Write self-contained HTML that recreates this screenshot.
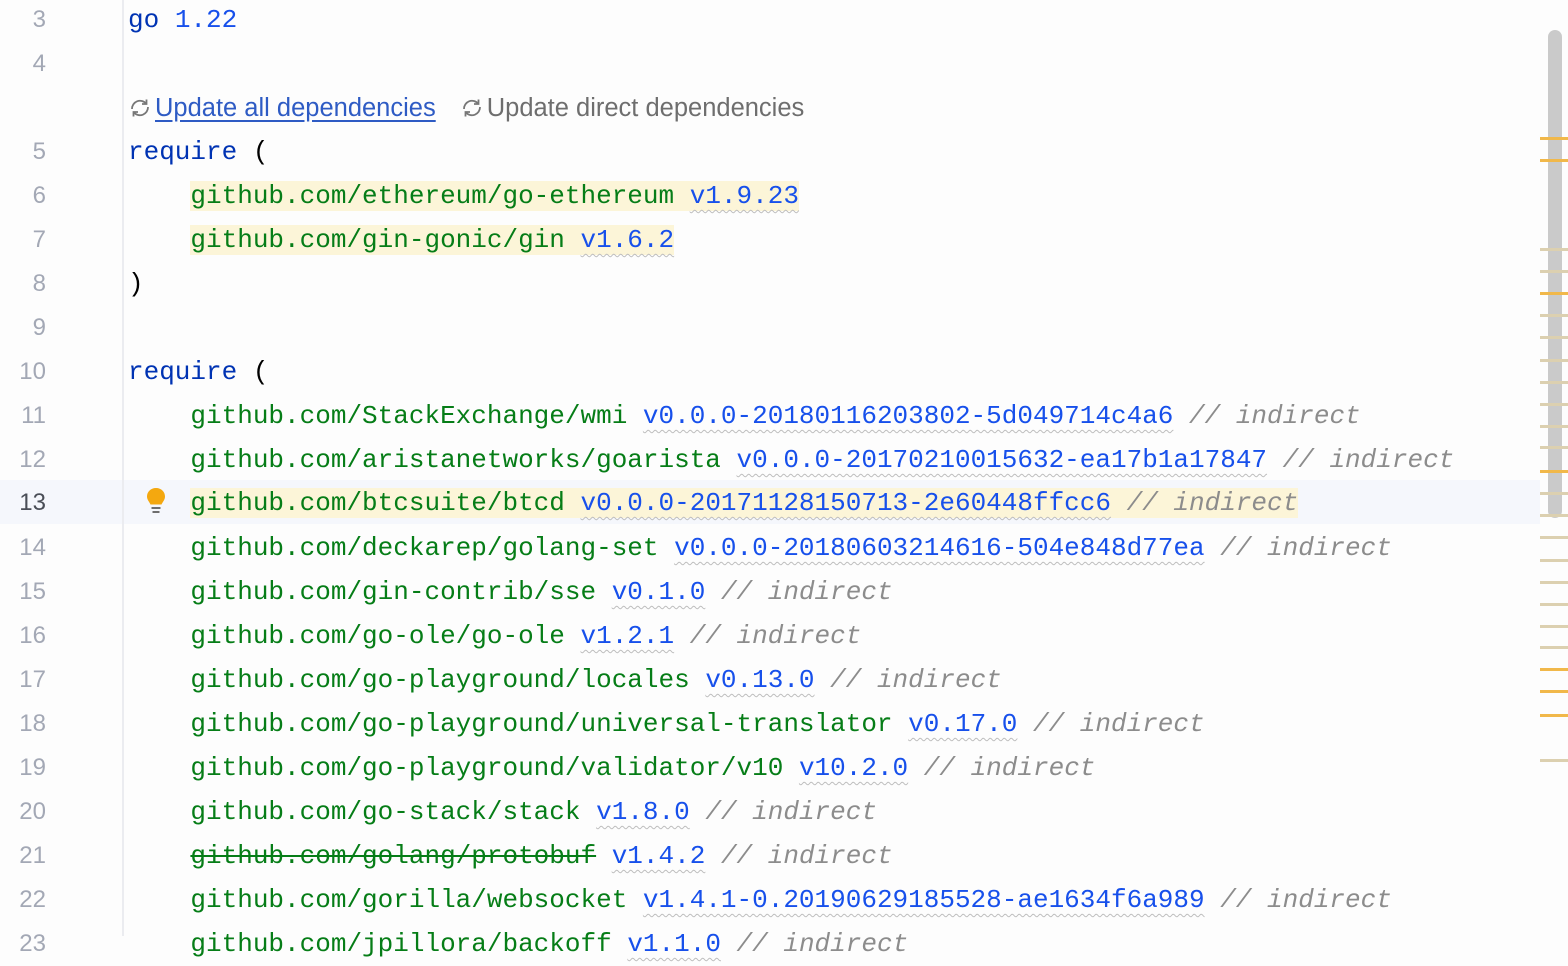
<!DOCTYPE html>
<html><head><meta charset="utf-8"><style>
html,body{margin:0;padding:0;width:1568px;height:936px;overflow:hidden;background:#fdfdfd;}
.row{position:absolute;left:0;width:1540px;height:44px;line-height:44px;font-family:"Liberation Mono",monospace;font-size:26px;white-space:pre;}
.ln{position:absolute;left:0;width:46px;text-align:right;color:#a3a8b5;font-family:"Liberation Sans",sans-serif;font-size:24px;}
.cur .ln{color:#4a4e57;}
.code{position:absolute;left:128px;top:0;}
.k{color:#0033b3}.n{color:#1750eb}.g{color:#067d17}.c{color:#8c8c8c;font-style:italic}
.v{color:#1750eb;text-decoration:underline wavy #bdbdbd;text-decoration-thickness:1px;text-underline-offset:6px}
.s{text-decoration:line-through;text-decoration-color:#067d17;text-decoration-thickness:2px}
.hl{background:#fcf5d8}
.gutter{position:absolute;left:122px;top:0;width:2px;height:936px;background:#ebecf0}
.mark{position:absolute;left:1540px;width:28px;height:3px;background:#dcd0b0}
.mark.o{background:#f1b84a}
.ico{display:inline-block;vertical-align:-3px;margin-right:3px}
</style></head><body>
<div style="position:absolute;left:0;top:480px;width:1540px;height:44px;background:#f5f7fc"></div>
<div class="gutter"></div>

<div class="row" style="top:-2px"><span class="ln">3</span><span class="code"><span class="k">go</span> <span class="n">1.22</span></span></div>
<div class="row" style="top:42px"><span class="ln">4</span></div>
<div style="position:absolute;top:91px;left:128px;font-family:'Liberation Sans',sans-serif;font-size:25.5px;line-height:34px;white-space:nowrap;">
<svg class="ico" width="24" height="22" viewBox="0 0 24 22" fill="none" stroke="#777" stroke-width="1.8"><path d="M4 12a8 8 0 0 1 14-5.5"/><path d="M20 10a8 8 0 0 1-14 5.5"/><path d="M18.5 2.5v4.5h-4.5"/><path d="M5.5 19.5v-4.5h4.5"/></svg><span style="color:#2e5bc4;text-decoration:underline;text-underline-offset:4px">Update all dependencies</span><span style="display:inline-block;width:24px"></span><svg class="ico" width="24" height="22" viewBox="0 0 24 22" fill="none" stroke="#777" stroke-width="1.8"><path d="M4 12a8 8 0 0 1 14-5.5"/><path d="M20 10a8 8 0 0 1-14 5.5"/><path d="M18.5 2.5v4.5h-4.5"/><path d="M5.5 19.5v-4.5h4.5"/></svg><span style="color:#6e6e6e">Update direct dependencies</span></div>
<div class="row" style="top:130px"><span class="ln">5</span><span class="code"><span class="k">require</span> (</span></div>
<div class="row" style="top:174px"><span class="ln">6</span><span class="code">    <span class="hl"><span class="g">github.com/ethereum/go-ethereum</span> <span class="v">v1.9.23</span></span></span></div>
<div class="row" style="top:218px"><span class="ln">7</span><span class="code">    <span class="hl"><span class="g">github.com/gin-gonic/gin</span> <span class="v">v1.6.2</span></span></span></div>
<div class="row" style="top:262px"><span class="ln">8</span><span class="code">)</span></div>
<div class="row" style="top:306px"><span class="ln">9</span></div>
<div class="row" style="top:350px"><span class="ln">10</span><span class="code"><span class="k">require</span> (</span></div>
<div class="row" style="top:394px"><span class="ln">11</span><span class="code">    <span class="g">github.com/StackExchange/wmi</span> <span class="v">v0.0.0-20180116203802-5d049714c4a6</span> <span class="c">// indirect</span></span></div>
<div class="row" style="top:438px"><span class="ln">12</span><span class="code">    <span class="g">github.com/aristanetworks/goarista</span> <span class="v">v0.0.0-20170210015632-ea17b1a17847</span> <span class="c">// indirect</span></span></div>
<div class="row cur" style="top:481px"><span class="ln">13</span><span class="code">    <span class="hl"><span class="g">github.com/btcsuite/btcd</span> <span class="v">v0.0.0-20171128150713-2e60448ffcc6</span> <span class="c">// indirect</span></span></span>
<svg style="position:absolute;left:145px;top:6px" width="22" height="32" viewBox="0 0 22 32"><path d="M11 1C5.5 1 2 5 2 9.5c0 3.5 2.5 5.5 3.5 8h11c1-2.5 3.5-4.5 3.5-8C20 5 16.5 1 11 1z" fill="#f4a80f"/><rect x="6.5" y="20" width="9" height="2" fill="#6e6e6e"/><rect x="7.5" y="24" width="7" height="2" fill="#6e6e6e"/></svg></div>
<div class="row" style="top:526px"><span class="ln">14</span><span class="code">    <span class="g">github.com/deckarep/golang-set</span> <span class="v">v0.0.0-20180603214616-504e848d77ea</span> <span class="c">// indirect</span></span></div>
<div class="row" style="top:570px"><span class="ln">15</span><span class="code">    <span class="g">github.com/gin-contrib/sse</span> <span class="v">v0.1.0</span> <span class="c">// indirect</span></span></div>
<div class="row" style="top:614px"><span class="ln">16</span><span class="code">    <span class="g">github.com/go-ole/go-ole</span> <span class="v">v1.2.1</span> <span class="c">// indirect</span></span></div>
<div class="row" style="top:658px"><span class="ln">17</span><span class="code">    <span class="g">github.com/go-playground/locales</span> <span class="v">v0.13.0</span> <span class="c">// indirect</span></span></div>
<div class="row" style="top:702px"><span class="ln">18</span><span class="code">    <span class="g">github.com/go-playground/universal-translator</span> <span class="v">v0.17.0</span> <span class="c">// indirect</span></span></div>
<div class="row" style="top:746px"><span class="ln">19</span><span class="code">    <span class="g">github.com/go-playground/validator/v10</span> <span class="v">v10.2.0</span> <span class="c">// indirect</span></span></div>
<div class="row" style="top:790px"><span class="ln">20</span><span class="code">    <span class="g">github.com/go-stack/stack</span> <span class="v">v1.8.0</span> <span class="c">// indirect</span></span></div>
<div class="row" style="top:834px"><span class="ln">21</span><span class="code">    <span class="g s">github.com/golang/protobuf</span> <span class="v">v1.4.2</span> <span class="c">// indirect</span></span></div>
<div class="row" style="top:878px"><span class="ln">22</span><span class="code">    <span class="g">github.com/gorilla/websocket</span> <span class="v">v1.4.1-0.20190629185528-ae1634f6a989</span> <span class="c">// indirect</span></span></div>
<div class="row" style="top:922px"><span class="ln">23</span><span class="code">    <span class="g">github.com/jpillora/backoff</span> <span class="v">v1.1.0</span> <span class="c">// indirect</span></span></div>

<div style="position:absolute;left:1548px;top:30px;width:14px;height:488px;border-radius:7px;background:#c4c4c4;opacity:.9"></div>
<div class="mark o" style="top:137px"></div><div class="mark o" style="top:159px"></div>
<div class="mark" style="top:248px"></div><div class="mark" style="top:270px"></div>
<div class="mark o" style="top:292px"></div><div class="mark" style="top:314px"></div>
<div class="mark" style="top:336px"></div><div class="mark" style="top:359px"></div>
<div class="mark" style="top:381px"></div><div class="mark" style="top:403px"></div>
<div class="mark" style="top:425px"></div><div class="mark" style="top:446px"></div>
<div class="mark o" style="top:470px"></div><div class="mark" style="top:492px"></div>
<div class="mark" style="top:514px"></div><div class="mark" style="top:536px"></div>
<div class="mark" style="top:559px"></div><div class="mark" style="top:581px"></div>
<div class="mark" style="top:603px"></div><div class="mark" style="top:625px"></div>
<div class="mark" style="top:646px"></div><div class="mark o" style="top:668px"></div>
<div class="mark o" style="top:690px"></div><div class="mark o" style="top:714px"></div>
<div class="mark" style="top:759px"></div>
</body></html>
